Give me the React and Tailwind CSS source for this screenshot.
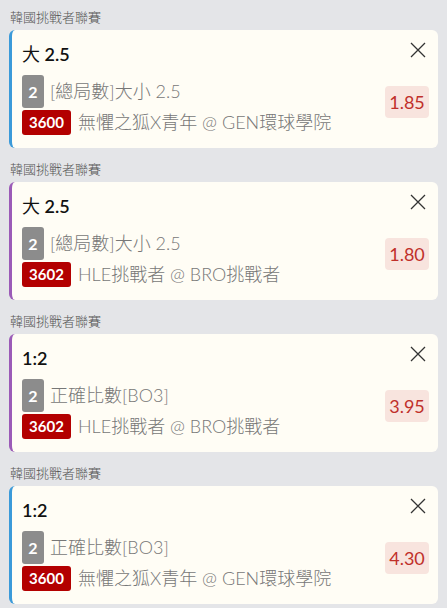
import React from "react";

const items = [
  { t1: "大", t2: " 2.5", market: "[總局數]大小 2.5", code: "3600", match: "無懼之狐X青年 @ GEN環球學院", odds: "1.85", border: "border-l-[#3b9ad9]" },
  { t1: "大", t2: " 2.5", market: "[總局數]大小 2.5", code: "3602", match: "HLE挑戰者 @ BRO挑戰者", odds: "1.80", border: "border-l-[#9b5bb7]" },
  { t1: "", t2: "1:2", market: "正確比數[BO3]", code: "3602", match: "HLE挑戰者 @ BRO挑戰者", odds: "3.95", border: "border-l-[#9b5bb7]" },
  { t1: "", t2: "1:2", market: "正確比數[BO3]", code: "3600", match: "無懼之狐X青年 @ GEN環球學院", odds: "4.30", border: "border-l-[#3b9ad9]" },
];

function CloseIcon() {
  return (
    <svg width="16" height="16" viewBox="0 0 16 16" className="block">
      <path d="M1 1 L15 15 M15 1 L1 15" stroke="#333" strokeWidth="1.3" fill="none" />
    </svg>
  );
}

export default function App() {
  return (
    <div
      className="min-h-screen bg-[#e4e5e8] px-[9px] pt-[4px] pb-[4px]"
      style={{ fontFamily: 'Lato, "Noto Sans CJK TC", "Noto Sans", sans-serif' }}
    >
      {items.map((it, i) => (
        <div key={i} className="mb-[8px]">
          <div className="h-[26px] leading-[26px] text-[13px] font-light text-[#555] pl-[1px]">韓國挑戰者聯賽</div>
          <div className={`h-[118px] rounded-[6px] bg-[#fffdf5] border-l-[3px] ${it.border} pl-[10px] pr-[12px] pt-[11px]`}>
            <div className="flex justify-between items-start h-[26px]">
              <div className="text-[18px] leading-[26px] text-[#111] whitespace-pre">
                {it.t1 && <span className="font-normal">{it.t1}</span>}
                <span className="font-semibold">{it.t2}</span>
              </div>
              <div className="mt-[1px]"><CloseIcon /></div>
            </div>
            <div className="flex justify-between items-start mt-[8px]">
              <div className="flex flex-col gap-[2px]">
                <div className="flex items-center h-[33px]">
                  <div className="w-[22px] h-[33px] rounded-[3px] bg-[#8c8c8c] text-white font-bold text-[16px] flex items-center justify-center">2</div>
                  <div className="ml-[6px] text-[18px] font-light text-[#777]">{it.market}</div>
                </div>
                <div className="flex items-center h-[25px]">
                  <div className="w-[49px] h-[25px] rounded-[3px] bg-[#b30000] text-white font-bold text-[15px] flex items-center justify-center">{it.code}</div>
                  <div className="ml-[7px] text-[18px] font-light text-[#777] whitespace-nowrap">{it.match}</div>
                </div>
              </div>
              <div className="mt-[11px] mr-[-3px] w-[44px] h-[32px] rounded-[4px] bg-[#f8e4de] text-[#c0302a] text-[18px] flex items-center justify-center">{it.odds}</div>
            </div>
          </div>
        </div>
      ))}
    </div>
  );
}
